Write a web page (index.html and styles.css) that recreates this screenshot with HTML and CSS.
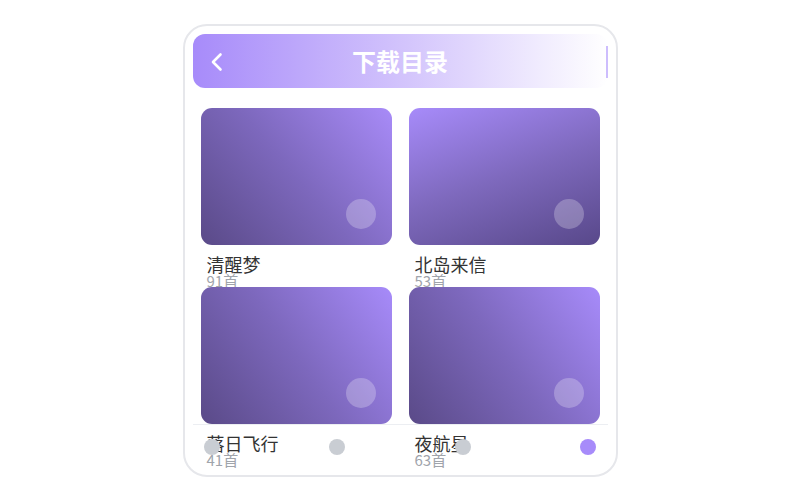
FILE: index.html
```html
<!DOCTYPE html>
<html lang="zh-CN">
<head>
  <meta charset="UTF-8" />
  <meta name="viewport" content="width=device-width, initial-scale=1.0"/>
  <title>下载目录</title>
  <link rel="stylesheet" href="styles.css">
</head>
<body>

  <div class="phone">
    <header class="topbar">
      <a class="back" href="#">
        <svg width="14" height="20" viewBox="0 0 14 20">
          <path d="M11.5 2.5 L4 10 L11.5 17.5" fill="none" stroke="#fff" stroke-width="2.6" stroke-linecap="round" stroke-linejoin="round"/>
        </svg>
      </a>
      <h1>下载目录</h1>
      <div class="edge"><span></span></div>
    </header>

    <section class="list">
      <div class="album">
        <div class="cover c1"><span class="play"></span></div>
        <div class="info">
          <div class="name">清醒梦</div>
          <div class="count">91首</div>
        </div>
      </div>
      <div class="album">
        <div class="cover c2"><span class="play"></span></div>
        <div class="info">
          <div class="name">北岛来信</div>
          <div class="count">53首</div>
        </div>
      </div>
      <div class="album">
        <div class="cover c3"><span class="play"></span></div>
        <div class="info">
          <div class="name">落日飞行</div>
          <div class="count">41首</div>
        </div>
      </div>
      <div class="album">
        <div class="cover c4"><span class="play"></span></div>
        <div class="info">
          <div class="name">夜航星</div>
          <div class="count">63首</div>
        </div>
      </div>
    </section>

    <nav class="tabbar">
      <span class="dot"></span>
      <span class="dot"></span>
      <span class="dot"></span>
      <span class="dot active"></span>
    </nav>
  </div>

</body>
</html>
```

FILE: styles.css
```css
body {
  margin: 0;
  padding: 0;
  height: 500px;
  display: flex;
  align-items: center;
  justify-content: center;
  background: #fff;
  font-family: "Noto Sans CJK SC", "Noto Sans", sans-serif;
}
.phone {
  position: relative;
  box-sizing: border-box;
  width: 435px;
  height: 453px;
  border: 2px solid #e6e7eb;
  border-radius: 24px;
  padding: 8px;
  background: #fff;
  overflow: hidden;
}
.topbar {
  height: 54px;
  display: grid;
  grid-template-columns: 48px 1fr 48px;
  align-items: center;
  border-radius: 12px;
  background: linear-gradient(90deg, #a78bfa 0%, #d2c3fc 50%, #fff 100%);
}
.back {
  display: flex;
  padding-left: 16px;
  margin-top: 3px;
}
.topbar h1 {
  margin: 0;
  text-align: center;
  font-size: 24px;
  line-height: 30px;
  font-weight: bold;
  color: #fff;
}
.edge {
  display: flex;
  justify-content: flex-end;
  margin-top: 3px;
}
.edge span {
  width: 2px;
  height: 32px;
  background: #cdbdfd;
}
.list {
  padding: 20px 8px 0;
  display: grid;
  grid-template-columns: 1fr 1fr;
  column-gap: 17px;
}
.album {
  height: 179px;
}
.cover {
  position: relative;
  height: 137px;
  border-radius: 11px;
}
.c1 { background: linear-gradient(50deg, #5a4a88 0%, #7d68bd 50%, #a88bf8 100%); }
.c2 { background: linear-gradient(160deg, #a78bfa 0%, #7e69bd 50%, #58488a 100%); }
.c3 { background: linear-gradient(55deg, #5a4a88 0%, #7d68bd 50%, #a78bfa 100%); }
.c4 { background: linear-gradient(55deg, #5a4a88 0%, #7d68bd 50%, #a78bfa 100%); }
.play {
  position: absolute;
  right: 16px;
  bottom: 16px;
  width: 30px;
  height: 30px;
  border-radius: 50%;
  background: rgba(255, 255, 255, 0.25);
}
.info {
  padding: 10px 6px 0;
}
.name {
  font-size: 18px;
  line-height: 18px;
  color: #333;
}
.count {
  font-size: 15px;
  line-height: 15px;
  color: #a0a4ab;
}
.tabbar {
  position: absolute;
  left: 8px;
  right: 8px;
  bottom: 0;
  height: 51px;
  box-sizing: border-box;
  border-top: 1px solid #eceef2;
  padding: 14px 11px 0;
  display: flex;
  justify-content: space-between;
  align-items: flex-start;
}
.dot {
  width: 16px;
  height: 16px;
  border-radius: 50%;
  background: #c9cdd3;
}
.dot.active {
  background: #a78bfa;
}
```
